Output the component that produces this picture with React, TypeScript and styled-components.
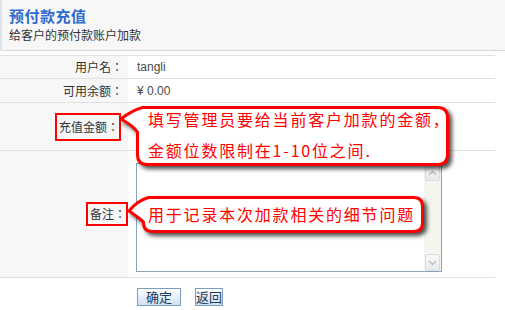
import React from 'react';
import styled, { createGlobalStyle } from 'styled-components';

const GlobalStyle = createGlobalStyle`
  body {
    margin: 0;
    background: #fff;
    font-family: "Noto Sans CJK SC", "Liberation Sans", sans-serif;
    font-size: 12px;
    color: #333;
  }
`;

const SPage = styled.div`
  position: relative;
  width: 505px;
  height: 310px;
  overflow: hidden;
`;

const SHeader = styled.header`
  height: 43px;
  padding: 7px 0 0 7px;
  background-color: #f7f7f7;
  border-left: 2px solid #dde3ea;
  border-bottom: 1px solid #d3d8de;
`;

const STitle = styled.h1`
  margin: 0;
  font-size: 15px;
  line-height: 17px;
  font-weight: bold;
  color: #2e6bce;
  letter-spacing: 0.5px;
`;

const SSubtitle = styled.p`
  margin: 4px 0 0;
  font-size: 12px;
  line-height: 14px;
  color: #333;
`;

const SForm = styled.div`
  width: 495px;
  margin-top: 4px;
`;

const SRow = styled.div<{ $h: number }>`
  box-sizing: border-box;
  display: grid;
  grid-template-columns: 128px 1fr;
  height: ${(p) => p.$h}px;
  border-top: 1px solid #e1e1e1;
`;

const SLabel = styled.div<{ $pr: number; $plain?: boolean }>`
  display: flex;
  align-items: center;
  justify-content: flex-end;
  padding-right: ${(p) => p.$pr}px;
  background-color: ${(p) => (p.$plain ? '#fff' : '#f7f7f7')};
  font-family: "Noto Sans CJK TC", "Noto Sans CJK SC", sans-serif;
  line-height: 14px;
  color: #333;
`;

const SMark = styled.span<{ $py: number }>`
  padding: ${(p) => p.$py}px 0 ${(p) => p.$py}px 2px;
  border: 2px solid #ff0000;
  line-height: 14px;
`;

const SValue = styled.div<{ $top?: boolean }>`
  display: flex;
  align-items: ${(p) => (p.$top ? 'flex-start' : 'center')};
  gap: 14px;
  padding-left: 9px;
  font-family: "Liberation Sans", "Noto Sans CJK SC", sans-serif;
  font-size: 12px;
  color: #4a4a4a;
`;

const SInput = styled.input`
  width: 150px;
  height: 18px;
  border: 1px solid #7f9db9;
`;

const SAreaBox = styled.div`
  display: flex;
  width: 304px;
  height: 107px;
  margin: 12px 0 0 -1px;
  border: 1px solid #8ba3bd;
  background: #fff;
`;

const STextArea = styled.textarea`
  flex: 1;
  border: none;
  outline: none;
  resize: none;
  padding: 2px;
  font-family: "Noto Sans CJK SC", sans-serif;
`;

const SScroll = styled.div`
  display: flex;
  flex-direction: column;
  justify-content: space-between;
  width: 17px;
  background: #f5f5ef;
`;

const SScrollBtn = styled.div`
  display: flex;
  align-items: center;
  justify-content: center;
  height: 15px;
  margin: 0 1px;
  border: 1px solid #d6dbe0;
  border-radius: 2px;
  background: linear-gradient(#f8f9fa, #e6e9ec);
`;

const SButton = styled.button<{ $wide?: boolean }>`
  height: 18px;
  padding: 0 ${(p) => (p.$wide ? 8 : 0)}px;
  border: 1px solid #7b9ebd;
  background: linear-gradient(#ffffff, #cfe1f4);
  font-family: "Noto Sans CJK SC", sans-serif;
  font-size: 13px;
  line-height: 16px;
  color: #1d3a5c;
  margin-top: 10px;
`;

const SBubble = styled.div`
  position: absolute;
`;

const SBubbleSvg = styled.svg`
  position: absolute;
  left: 0;
  top: 0;
  overflow: visible;
  filter: drop-shadow(3px 3px 2px rgba(0, 0, 0, 0.7));
`;

const SBubbleText = styled.div<{ $pl: number; $pt: number }>`
  position: relative;
  padding: ${(p) => p.$pt}px 0 0 ${(p) => p.$pl}px;
  font-family: "Noto Sans CJK SC", sans-serif;
  font-size: 16px;
  line-height: 31px;
  letter-spacing: 1.8px;
  color: #ff0000;
  white-space: nowrap;
`;

type CalloutProps = {
  left: number;
  top: number;
  width: number;
  height: number;
  tipX: number;
  tipY: number;
  baseBottom: number;
  r: number;
  textX: number;
  textY: number;
  children: React.ReactNode;
};

// speech bubble drawn as one path (body + tail), text laid over it
const Callout = ({ left, top, width, height, tipX, tipY, baseBottom, r, textX, textY, children }: CalloutProps) => {
  const ox = tipX - 2;
  const oy = top - 2;
  const s = 1.5;
  const L = left - ox + s;
  const R = left + width - ox - s;
  const T = top - oy + s;
  const B = top + height - oy - s;
  const tx = tipX - ox;
  const ty = tipY - oy;
  const bb = baseBottom - oy;
  const d = `M ${L + r} ${T} H ${R - r} Q ${R} ${T} ${R} ${T + r} V ${B - r} Q ${R} ${B} ${R - r} ${B} H ${L + r} Q ${L} ${B} ${L} ${B - r} V ${bb} Q ${L - 4} ${ty + 7} ${tx} ${ty} Q ${L - 6} ${T + 3} ${L + 5} ${T} Z`;
  const w = left + width - ox + 6;
  const h = height + 8;
  return (
    <SBubble style={{ left: ox, top: oy, width: w, height: h }}>
      <SBubbleSvg width={w} height={h}>
        <path d={d} fill="#fff" stroke="#ff0000" strokeWidth={3} strokeLinejoin="round" />
      </SBubbleSvg>
      <SBubbleText $pl={textX - ox} $pt={textY - oy}>
        {children}
      </SBubbleText>
    </SBubble>
  );
};

const App = () => {
  return (
    <>
      <GlobalStyle />
      <SPage>
        <SHeader>
          <STitle>预付款充值</STitle>
          <SSubtitle>给客户的预付款账户加款</SSubtitle>
        </SHeader>
        <SForm>
          <SRow $h={23}>
            <SLabel $pr={5}>用户名：</SLabel>
            <SValue>tangli</SValue>
          </SRow>
          <SRow $h={24}>
            <SLabel $pr={5}>可用余额：</SLabel>
            <SValue>¥ 0.00</SValue>
          </SRow>
          <SRow $h={48}>
            <SLabel $pr={7}>
              <SMark $py={5}>充值金额：</SMark>
            </SLabel>
            <SValue>
              <SInput />
            </SValue>
          </SRow>
          <SRow $h={127}>
            <SLabel $pr={0}>
              <SMark $py={3}>备注：</SMark>
            </SLabel>
            <SValue $top>
              <SAreaBox>
                <STextArea />
                <SScroll>
                  <SScrollBtn>
                    <svg width="9" height="6" viewBox="0 0 9 6">
                      <path d="M1 5 L4.5 1.5 L8 5" fill="none" stroke="#b9bec4" strokeWidth="1.5" />
                    </svg>
                  </SScrollBtn>
                  <SScrollBtn>
                    <svg width="9" height="6" viewBox="0 0 9 6">
                      <path d="M1 1 L4.5 4.5 L8 1" fill="none" stroke="#b9bec4" strokeWidth="1.5" />
                    </svg>
                  </SScrollBtn>
                </SScroll>
              </SAreaBox>
            </SValue>
          </SRow>
          <SRow $h={33}>
            <SLabel $pr={0} $plain />
            <SValue $top>
              <SButton $wide>确定</SButton>
              <SButton>返回</SButton>
            </SValue>
          </SRow>
        </SForm>

        <Callout left={136} top={106} width={313} height={60} tipX={121} tipY={119} baseBottom={132} r={10} textX={148} textY={104}>
          填写管理员要给当前客户加款的金额，
          <br />
          金额位数限制在1-10位之间.
        </Callout>
        <Callout left={142} top={196} width={282} height={37} tipX={129} tipY={211} baseBottom={222} r={9} textX={148} textY={199}>
          用于记录本次加款相关的细节问题
        </Callout>
      </SPage>
    </>
  );
};

export default App;
